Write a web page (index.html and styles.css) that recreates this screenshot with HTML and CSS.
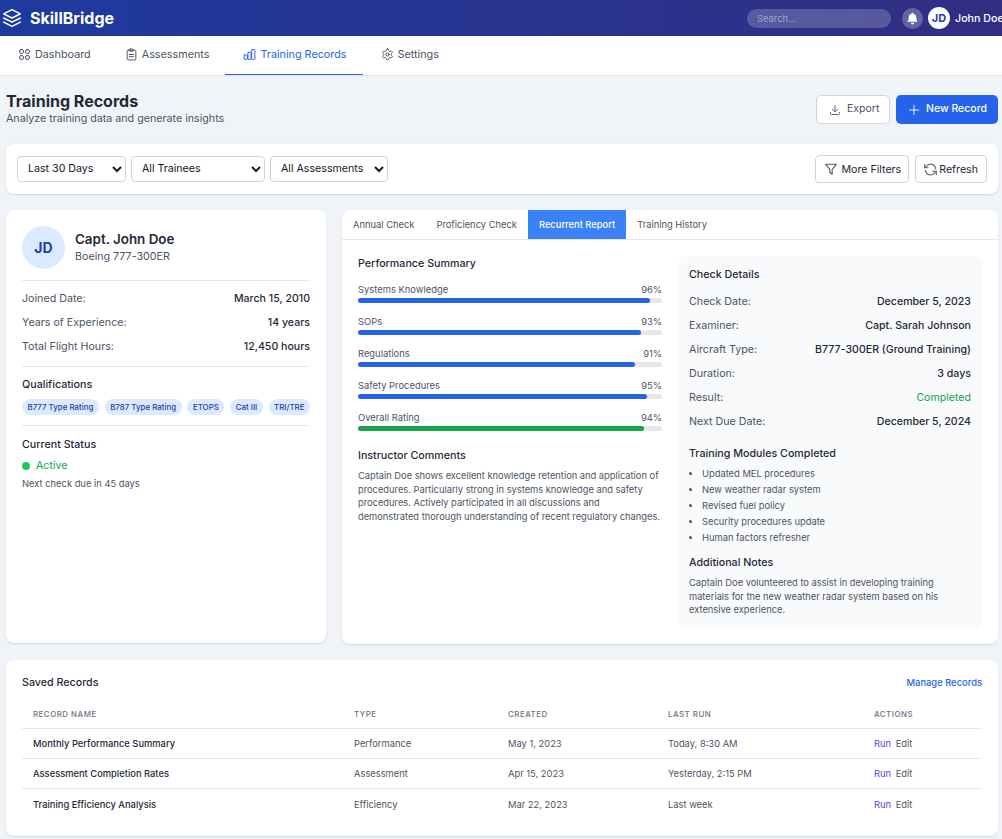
FILE: index.html
```html
<!DOCTYPE html>
<html lang="en">
<head>
  <meta charset="UTF-8">
  <title>SkillBridge - Training Records</title>
  <link rel="stylesheet" href="styles.css">
</head>
<body>
  <header class="topbar">
    <div class="brand">
      <svg class="brand-icon" viewBox="0 0 24 24" stroke-width="2"><path d="M12 2 2 7l10 5 10-5-10-5Z"/><path d="m2 12 10 5 10-5"/><path d="m2 17 10 5 10-5"/></svg>
      <span>SkillBridge</span>
    </div>
    <div class="topbar-right">
      <input class="search" type="text" placeholder="Search...">
      <div class="bell">
        <svg viewBox="0 0 24 24"><path d="M12 1.500a1.800 1.800 0 0 0-1.800 1.900A7 7 0 0 0 5 10c0 5-1.600 6.500-2.800 8h19.600c-1.200-1.500-2.800-3-2.800-8a7 7 0 0 0-5.200-6.600A1.800 1.800 0 0 0 12 1.500Z"/><path d="M9 20a3 3 0 0 0 6 0Z"/></svg>
      </div>
      <div class="avatar-small">JD</div>
      <span class="user-name">John Doe</span>
    </div>
  </header>

  <nav class="tabs-main">
    <a href="#"><svg viewBox="0 0 24 24"><rect x="3" y="3" width="7" height="7" rx="2.500"/><rect x="14" y="3" width="7" height="7" rx="2.500"/><rect x="3" y="14" width="7" height="7" rx="2.500"/><rect x="14" y="14" width="7" height="7" rx="2.500"/></svg>Dashboard</a>
    <a href="#"><svg viewBox="0 0 24 24"><rect x="4" y="4" width="16" height="18" rx="2"/><rect x="8.500" y="2" width="7" height="4" rx="1"/><path d="M8 12h8M8 16h8"/></svg>Assessments</a>
    <a href="#" class="active"><svg viewBox="0 0 24 24"><rect x="2" y="13" width="6" height="8" rx="1"/><rect x="9" y="8" width="6" height="13" rx="1"/><rect x="16" y="3" width="6" height="18" rx="1"/></svg>Training Records</a>
    <a href="#"><svg viewBox="0 0 24 24"><circle cx="12" cy="12" r="3"/><path d="M12.220 2h-.44a2 2 0 0 0-2 2v.18a2 2 0 0 1-1 1.730l-.43.25a2 2 0 0 1-2 0l-.15-.08a2 2 0 0 0-2.730.73l-.22.38a2 2 0 0 0 .73 2.730l.15.1a2 2 0 0 1 1 1.720v.51a2 2 0 0 1-1 1.740l-.15.09a2 2 0 0 0-.73 2.730l.22.38a2 2 0 0 0 2.730.73l.15-.08a2 2 0 0 1 2 0l.43.25a2 2 0 0 1 1 1.730V20a2 2 0 0 0 2 2h.44a2 2 0 0 0 2-2v-.18a2 2 0 0 1 1-1.730l.43-.25a2 2 0 0 1 2 0l.15.08a2 2 0 0 0 2.730-.73l.22-.39a2 2 0 0 0-.73-2.730l-.15-.08a2 2 0 0 1-1-1.740v-.5a2 2 0 0 1 1-1.740l.15-.09a2 2 0 0 0 .73-2.730l-.22-.38a2 2 0 0 0-2.730-.73l-.15.08a2 2 0 0 1-2 0l-.43-.25a2 2 0 0 1-1-1.730V4a2 2 0 0 0-2-2z"/></svg>Settings</a>
  </nav>

  <main class="page">
    <div class="page-head">
      <div>
        <h1>Training Records</h1>
        <p>Analyze training data and generate insights</p>
      </div>
      <div class="page-actions">
        <button class="btn btn-export"><svg viewBox="0 0 24 24"><path d="M12 3v12M7 10.500l5 5 5-5M3 17v2a2 2 0 0 0 2 2h14a2 2 0 0 0 2-2v-2"/></svg>Export</button>
        <button class="btn btn-primary"><svg viewBox="0 0 24 24"><path d="M12 3v18M3 12h18"/></svg>New Record</button>
      </div>
    </div>

    <div class="card filters">
      <div class="filter-selects">
        <select class="w-days"><option>Last 30 Days</option></select>
        <select class="w-trainees"><option>All Trainees</option></select>
        <select class="w-assess"><option>All Assessments</option></select>
      </div>
      <div class="filter-buttons">
        <button class="btn-small"><svg viewBox="0 0 24 24"><path d="M3 4h18l-7 8.500V21l-4-3v-5.500Z"/></svg>More Filters</button>
        <button class="btn-small btn-refresh"><svg viewBox="2 2 20 20"><path d="M20 11a8 8 0 0 0-14-4.500L3 9M3 4v5h5M4 13a8 8 0 0 0 14 4.500L21 15M21 20v-5h-5"/></svg>Refresh</button>
      </div>
    </div>

    <div class="columns">
      <section class="card profile">
        <div class="profile-top">
          <div class="avatar-big">JD</div>
          <div>
            <h2>Capt. John Doe</h2>
            <p>Boeing 777-300ER</p>
          </div>
        </div>
        <div class="info-block">
          <div class="row"><span>Joined Date:</span><b>March 15, 2010</b></div>
          <div class="row"><span>Years of Experience:</span><b>14 years</b></div>
          <div class="row"><span>Total Flight Hours:</span><b>12,450 hours</b></div>
        </div>
        <div class="quals">
          <h3>Qualifications</h3>
          <div class="chips">
            <span>B777 Type Rating</span><span>B787 Type Rating</span><span>ETOPS</span><span>Cat III</span><span>TRI/TRE</span>
          </div>
        </div>
        <div class="status">
          <h3>Current Status</h3>
          <div class="status-line"><i></i>Active</div>
          <p>Next check due in 45 days</p>
        </div>
      </section>

      <section class="card report">
        <div class="report-tabs">
          <a href="#">Annual Check</a>
          <a href="#">Proficiency Check</a>
          <a href="#" class="active">Recurrent Report</a>
          <a href="#">Training History</a>
        </div>
        <div class="report-body">
          <div class="report-left">
            <h3>Performance Summary</h3>
            <div class="bars">
              <div class="bar-item"><div class="bar-label"><span>Systems Knowledge</span><span>96%</span></div><div class="bar"><div class="bar-fill" style="width: 96%"></div></div></div>
              <div class="bar-item"><div class="bar-label"><span>SOPs</span><span>93%</span></div><div class="bar"><div class="bar-fill" style="width: 93%"></div></div></div>
              <div class="bar-item"><div class="bar-label"><span>Regulations</span><span>91%</span></div><div class="bar"><div class="bar-fill" style="width: 91%"></div></div></div>
              <div class="bar-item"><div class="bar-label"><span>Safety Procedures</span><span>95%</span></div><div class="bar"><div class="bar-fill" style="width: 95%"></div></div></div>
              <div class="bar-item"><div class="bar-label"><span>Overall Rating</span><span>94%</span></div><div class="bar"><div class="bar-fill green" style="width: 94%"></div></div></div>
            </div>
            <h3 class="comments-title">Instructor Comments</h3>
            <p class="small-text">Captain Doe shows excellent knowledge retention and application of procedures. Particularly strong in systems knowledge and safety procedures. Actively participated in all discussions and demonstrated thorough understanding of recent regulatory changes.</p>
          </div>
          <div class="report-right">
            <h3>Check Details</h3>
            <div class="row"><span>Check Date:</span><b>December 5, 2023</b></div>
            <div class="row"><span>Examiner:</span><b>Capt. Sarah Johnson</b></div>
            <div class="row"><span>Aircraft Type:</span><b>B777-300ER (Ground Training)</b></div>
            <div class="row"><span>Duration:</span><b>3 days</b></div>
            <div class="row"><span>Result:</span><b class="done">Completed</b></div>
            <div class="row"><span>Next Due Date:</span><b>December 5, 2024</b></div>
            <h3 class="modules-title">Training Modules Completed</h3>
            <ul>
              <li>Updated MEL procedures</li>
              <li>New weather radar system</li>
              <li>Revised fuel policy</li>
              <li>Security procedures update</li>
              <li>Human factors refresher</li>
            </ul>
            <h3 class="notes-title">Additional Notes</h3>
            <p class="small-text">Captain Doe volunteered to assist in developing training materials for the new weather radar system based on his extensive experience.</p>
          </div>
        </div>
      </section>
    </div>

    <section class="card saved">
      <div class="saved-head">
        <h3>Saved Records</h3>
        <a href="#">Manage Records</a>
      </div>
      <table>
        <thead>
          <tr><th>Record Name</th><th>Type</th><th>Created</th><th>Last Run</th><th>Actions</th></tr>
        </thead>
        <tbody>
          <tr><td class="name">Monthly Performance Summary</td><td class="muted">Performance</td><td>May 1, 2023</td><td>Today, 8:30 AM</td><td class="acts"><a href="#">Run</a> <span>Edit</span></td></tr>
          <tr><td class="name">Assessment Completion Rates</td><td class="muted">Assessment</td><td>Apr 15, 2023</td><td>Yesterday, 2:15 PM</td><td class="acts"><a href="#">Run</a> <span>Edit</span></td></tr>
          <tr><td class="name">Training Efficiency Analysis</td><td class="muted">Efficiency</td><td>Mar 22, 2023</td><td>Last week</td><td class="acts"><a href="#">Run</a> <span>Edit</span></td></tr>
        </tbody>
      </table>
    </section>
  </main>
</body>
</html>
```

FILE: styles.css
```css
* {
  box-sizing: border-box;
}
body {
  margin: 0;
  font-family: Inter, "Liberation Sans", sans-serif;
  font-size: 10.700px;
  color: #1f2937;
  background-color: #f0f4f8;
}
h1, h2, h3, p {
  margin: 0;
}
a {
  text-decoration: none;
}
svg {
  fill: none;
  stroke: currentColor;
  stroke-width: 1.8;
  stroke-linecap: round;
  stroke-linejoin: round;
}

.topbar {
  height: 36px;
  padding: 0 0 0 2px;
  display: flex;
  align-items: center;
  justify-content: space-between;
  color: white;
  background: linear-gradient(90deg, #1e3a9f, #312e81);
}
.brand {
  display: flex;
  align-items: center;
  gap: 8px;
  font-size: 16px;
  font-weight: 700;
}
.brand-icon {
  width: 20px;
  height: 20px;
}
.topbar-right {
  display: flex;
  align-items: center;
}
.search {
  width: 144px;
  height: 19px;
  margin-right: 11px;
  padding: 0 10px;
  border: 0;
  border-radius: 10px;
  font-family: inherit;
  font-size: 9.400px;
  color: white;
  background: rgba(255, 255, 255, 0.2);
}
.search::placeholder {
  color: rgba(255, 255, 255, 0.45);
}
.bell {
  width: 21px;
  height: 21px;
  margin-right: 5px;
  display: flex;
  align-items: center;
  justify-content: center;
  border-radius: 50%;
  background: rgba(255, 255, 255, 0.25);
}
.bell svg {
  width: 13px;
  height: 13px;
  fill: white;
  stroke: none;
}
.avatar-small {
  width: 22px;
  height: 22px;
  margin-right: 5px;
  display: flex;
  align-items: center;
  justify-content: center;
  border-radius: 50%;
  font-size: 11px;
  font-weight: 700;
  color: #1e40af;
  background: white;
}
.user-name {
  width: 47px;
  font-size: 10.700px;
  font-weight: 500;
  white-space: nowrap;
}

.tabs-main {
  height: 40px;
  display: flex;
  background: white;
  border-bottom: 1px solid #dfe3e8;
}
.tabs-main a {
  padding: 0 16px 2px 18px;
  display: flex;
  align-items: center;
  gap: 4px;
  font-size: 10.800px;
  color: #4b5563;
  border-bottom: 1px solid transparent;
}
.tabs-main a svg {
  width: 13px;
  height: 13px;
}
.tabs-main a.active {
  color: #2563eb;
  border-bottom-color: #2563eb;
}

.page {
  padding: 12px 4px 4px 6px;
}
.page-head {
  display: flex;
  justify-content: space-between;
  align-items: flex-start;
  margin-bottom: 19px;
  padding-top: 3px;
}
.page-head h1 {
  font-size: 16px;
  font-weight: 700;
  line-height: 20px;
  color: #1f2937;
}
.page-head p {
  margin-top: 1px;
  color: #4b5563;
}
.page-actions {
  display: flex;
  gap: 6px;
  margin-top: 4px;
}
.btn {
  height: 29px;
  padding-bottom: 3px;
  display: flex;
  align-items: center;
  gap: 6px;
  border-radius: 5px;
  font-family: inherit;
  font-size: 10.500px;
  font-weight: 400;
}
.btn svg {
  width: 12px;
  height: 12px;
  margin-top: 3px;
}
.btn-export {
  width: 74px;
  padding-left: 12px;
  color: #4b5563;
  background: white;
  border: 1px solid #d1d5db;
}
.btn-primary {
  width: 102px;
  padding-left: 12px;
  font-weight: 500;
  color: white;
  background: #2563eb;
  border: 0;
}

.card {
  background: white;
  border-radius: 8px;
  box-shadow: 0 1px 2px rgba(0, 0, 0, 0.12);
}
.filters {
  height: 50px;
  padding: 0 11px;
  margin-bottom: 16px;
  display: flex;
  align-items: center;
  justify-content: space-between;
}
.filter-selects {
  display: flex;
  gap: 5px;
}
.filter-buttons {
  display: flex;
  gap: 6px;
}
select {
  height: 26px;
  padding: 0 6px 2px;
  font-family: inherit;
  font-size: 10.650px;
  color: #111827;
  background: white;
  border: 1px solid #d1d5db;
  border-radius: 4px;
}
.w-days {
  width: 109px;
}
.w-trainees {
  width: 134px;
}
.w-assess {
  width: 118px;
}
.btn-small {
  height: 28px;
  padding: 0 7px 0 8px;
  display: flex;
  align-items: center;
  gap: 3px;
  font-family: inherit;
  font-size: 10.650px;
  color: #1f2937;
  background: white;
  border: 1px solid #d1d5db;
  border-radius: 4px;
}
.btn-small svg {
  width: 14px;
  height: 14px;
  color: #4b5563;
}
.btn-refresh {
  padding-right: 8px;
  gap: 2px;
}
.btn-refresh svg {
  width: 13px;
  height: 13px;
  color: #6b7280;
}

.columns {
  display: grid;
  grid-template-columns: 320px 1fr;
  gap: 16px;
  margin-bottom: 16px;
}
.profile {
  height: 433px;
  padding: 16px;
}
.profile-top {
  display: flex;
  align-items: center;
  gap: 10px;
  padding-bottom: 11px;
  border-bottom: 1px solid #e5e7eb;
}
.avatar-big {
  width: 43px;
  height: 43px;
  display: flex;
  align-items: center;
  justify-content: center;
  border-radius: 50%;
  font-size: 14px;
  font-weight: 700;
  color: #1e40af;
  background: #dbeafe;
}
.profile-top h2 {
  margin-bottom: 2px;
  font-size: 13.400px;
  font-weight: 600;
  line-height: 16px;
}
.profile-top p {
  color: #4b5563;
  line-height: 16px;
}
.row {
  height: 24px;
  display: flex;
  align-items: center;
  justify-content: space-between;
  color: #4b5563;
}
.row b {
  font-size: 10.600px;
  font-weight: 500;
  color: #1f2937;
}
.row b.done {
  font-weight: 400;
  color: #16a34a;
}
.info-block {
  padding: 5px 0 8px;
  border-bottom: 1px solid #e5e7eb;
}
.quals {
  padding: 11px 0 10px;
  border-bottom: 1px solid #e5e7eb;
}
h3 {
  font-size: 10.700px;
  font-weight: 500;
  line-height: 14px;
}
.chips {
  display: flex;
  justify-content: space-between;
  margin-top: 7px;
}
.chips span {
  height: 16px;
  padding: 0 5.500px;
  display: flex;
  align-items: center;
  border-radius: 8px;
  font-size: 7.900px;
  font-weight: 500;
  color: #1e40af;
  background: #dbeafe;
}
.status {
  padding-top: 12px;
}
.status-line {
  margin-top: 7px;
  display: flex;
  align-items: center;
  gap: 6px;
  color: #16a34a;
  line-height: 14px;
}
.status-line i {
  width: 8px;
  height: 8px;
  border-radius: 50%;
  background: #22c55e;
}
.status p {
  margin-top: 5px;
  font-size: 9.350px;
  color: #4b5563;
}

.report-tabs {
  height: 30px;
  display: flex;
  border-bottom: 1px solid #e5e7eb;
}
.report-tabs a {
  padding: 0 11px;
  display: flex;
  align-items: center;
  font-size: 9.350px;
  color: #4b5563;
}
.report-tabs a.active {
  color: white;
  font-weight: 500;
  background: #3b82f6;
}
.report-body {
  padding: 16px;
  display: grid;
  grid-template-columns: 1fr 1fr;
  gap: 16px;
}
.report-left {
  padding-top: 1px;
}
.bars {
  margin-top: 12px;
}
.bar-item {
  height: 32px;
}
.bar-label {
  display: flex;
  justify-content: space-between;
  font-size: 9.400px;
  line-height: 13px;
  color: #4b5563;
}
.bar {
  height: 5px;
  margin-top: 2px;
  border-radius: 3px;
  background: #e5e7eb;
}
.bar-fill {
  height: 100%;
  border-radius: 3px;
  background: #2563eb;
}
.bar-fill.green {
  background: #16a34a;
}
.comments-title {
  margin-top: 6px;
}
.small-text {
  margin-top: 6px;
  font-size: 9.300px;
  line-height: 13.600px;
  color: #4b5563;
}
.report-right {
  padding: 12px 11px 11px;
  border-radius: 8px;
  background: #f9fafb;
}
.report-right h3:first-child {
  margin-bottom: 7px;
}
.modules-title {
  margin-top: 14px;
}
ul {
  margin: 5px 0 0;
  padding-left: 13px;
  font-size: 9.350px;
  line-height: 16px;
  color: #4b5563;
}
.notes-title {
  margin-top: 10px;
}

.saved {
  height: 176px;
  padding: 16px;
}
.saved-head {
  display: flex;
  justify-content: space-between;
  align-items: center;
  margin-bottom: 9px;
}
.saved-head a {
  font-size: 9.400px;
  font-weight: 500;
  color: #2563eb;
}
table {
  width: 100%;
  border-collapse: collapse;
  font-size: 9.350px;
}
th {
  height: 30px;
  padding: 0 11px;
  text-align: left;
  font-size: 7.900px;
  font-weight: 500;
  letter-spacing: 0.5px;
  text-transform: uppercase;
  color: #6b7280;
  border-bottom: 1px solid #e5e7eb;
}
td {
  height: 30px;
  padding: 0 11px;
  color: #4b5563;
  border-bottom: 1px solid #e5e7eb;
}
tr:last-child td {
  border-bottom: 0;
}
td.name {
  font-weight: 500;
  color: #1f2937;
}
.acts a {
  color: #4f46e5;
  margin-right: 2px;
}
th:nth-child(1) {
  width: 321px;
}
th:nth-child(2) {
  width: 154px;
}
th:nth-child(3) {
  width: 160px;
}
th:nth-child(4) {
  width: 206px;
}
```
